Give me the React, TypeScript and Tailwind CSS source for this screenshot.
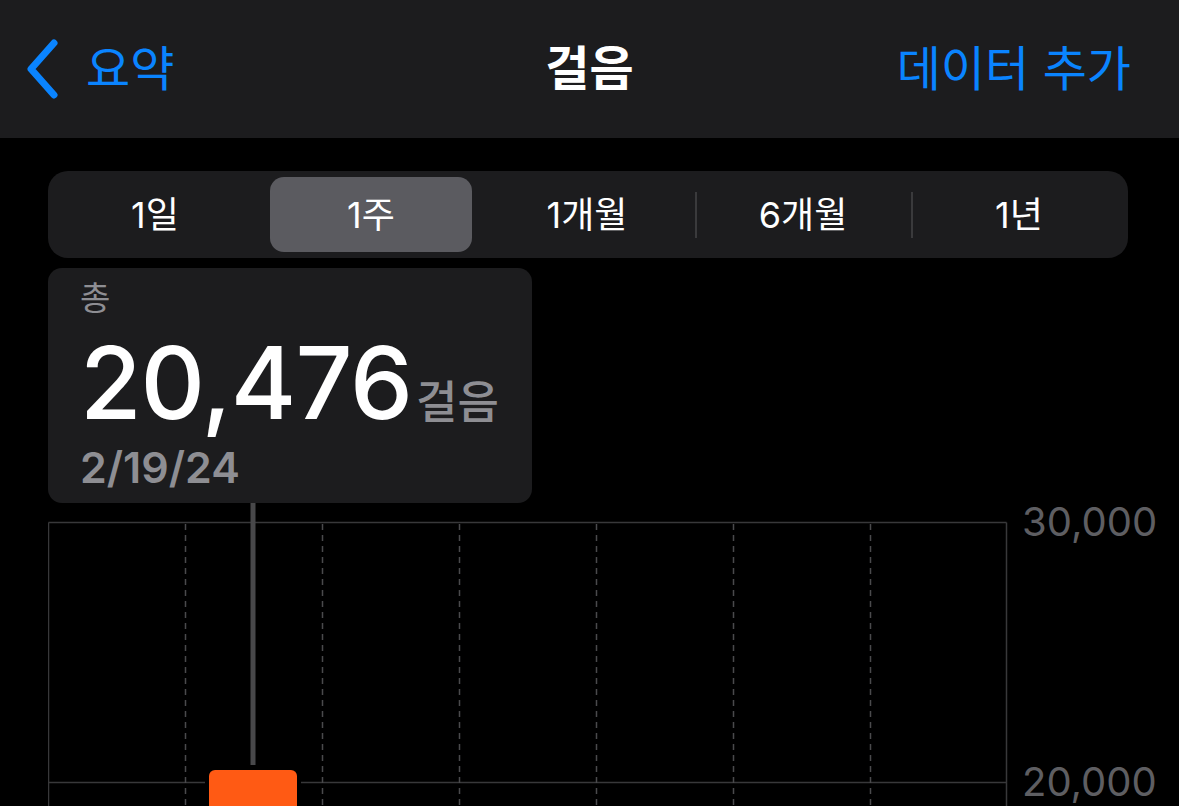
import React from 'react';

const FONT = 'font-[Inter,"Noto_Sans_CJK_KR",sans-serif]';

// Range tabs on the segmented control
const RANGES = ['1일', '1주', '1개월', '6개월', '1년'];
const SELECTED = 1;

const Chevron = () => (
  <svg width="36" height="60" viewBox="0 0 36 60" fill="none">
    <path d="M30 4 L7 30 L30 56" stroke="#0a84ff" strokeWidth="7" strokeLinecap="round" strokeLinejoin="round" />
  </svg>
);

const Chart = () => {
  const cols = [137, 274, 411, 548, 685, 822];
  return (
    <svg width="962" height="303" viewBox="0 0 962 303" className="block">
      {/* frame */}
      <line x1="0.5" y1="19.5" x2="958.5" y2="19.5" stroke="#38383a" strokeWidth="1.5" />
      <line x1="0.5" y1="19.5" x2="0.5" y2="303" stroke="#38383a" strokeWidth="1.5" />
      <line x1="958.5" y1="19.5" x2="958.5" y2="303" stroke="#38383a" strokeWidth="1.5" />
      <line x1="0" y1="279.5" x2="959" y2="279.5" stroke="#38383a" strokeWidth="1.5" />
      {cols.map(x => (
        <line key={x} x1={x + 0.5} y1="21" x2={x + 0.5} y2="303" stroke="#4a4a4c" strokeWidth="1.5" strokeDasharray="6 5" />
      ))}
      {/* selection marker */}
      <rect x="202.5" y="0" width="5" height="262" fill="#48484a" />
      {/* bar */}
      <rect x="157" y="263" width="96" height="60" rx="9" fill="#000" />
      <rect x="161" y="267" width="88" height="60" rx="6" fill="#ff5a14" />
    </svg>
  );
};

export default function App() {
  return (
    <div className={`w-[1179px] h-[806px] overflow-hidden bg-black text-white ${FONT}`}>
      {/* Nav bar */}
      <header className="h-[138px] bg-[#1c1c1e] grid grid-cols-[1fr_auto_1fr] items-center">
        <div className="flex items-center pl-[24px] gap-[26px] text-[#0a84ff]">
          <Chevron />
          <span className="text-[48px] leading-none">요약</span>
        </div>
        <div className="text-[48px] leading-none font-bold">걸음</div>
        <div className="flex justify-end pr-[48px]">
          <span className="text-[48px] leading-none text-[#0a84ff]">데이터 추가</span>
        </div>
      </header>

      {/* Range picker */}
      <div className="ml-[48px] mt-[33px] w-[1080px] h-[87px] rounded-[20px] bg-[#1c1c1e] flex items-stretch">
        {RANGES.map((r, i) => (
          <React.Fragment key={r}>
            {i > 0 && (
              <div
                className={`w-[2px] mx-[-1px] h-[46px] self-center ${
                  i === SELECTED || i === SELECTED + 1 ? 'bg-transparent' : 'bg-[#3a3a3c]'
                }`}
              />
            )}
            <div className="flex-1 flex p-[6px] pr-[8px]">
              <div
                className={`flex-1 flex items-center justify-center rounded-[14px] text-[36px] leading-none ${
                  i === SELECTED ? 'bg-[#5b5b60]' : ''
                }`}
              >
                {r}
              </div>
            </div>
          </React.Fragment>
        ))}
      </div>

      {/* Selection callout */}
      <div className="ml-[48px] mt-[10px] w-[484px] h-[235px] rounded-[14px] bg-[#1c1c1e] pl-[32px] pt-[10px]">
        <div className="text-[33px] leading-[40px] text-[#8e8e93]">총</div>
        <div className="flex items-baseline h-[80px] mt-[25px]">
          <span className="text-[100px] leading-[80px] font-medium tracking-[-1px]">20,476</span>
          <span className="text-[45px] leading-[50px] font-medium text-[#8e8e93] ml-[4px]">걸음</span>
        </div>
        <div className="text-[43px] leading-[44px] font-semibold text-[#8e8e93] mt-[22px]">2/19/24</div>
      </div>

      {/* Chart */}
      <div className="flex mt-[-17px]">
        <div className="ml-[48px] mt-[17px]">
          <Chart />
        </div>
        <div className="ml-[12px] flex flex-col text-[40px] leading-[40px] text-[#5e5e62]">
          <span className="mt-[16px]">30,000</span>
          <span className="mt-[220px]">20,000</span>
        </div>
      </div>
    </div>
  );
}
